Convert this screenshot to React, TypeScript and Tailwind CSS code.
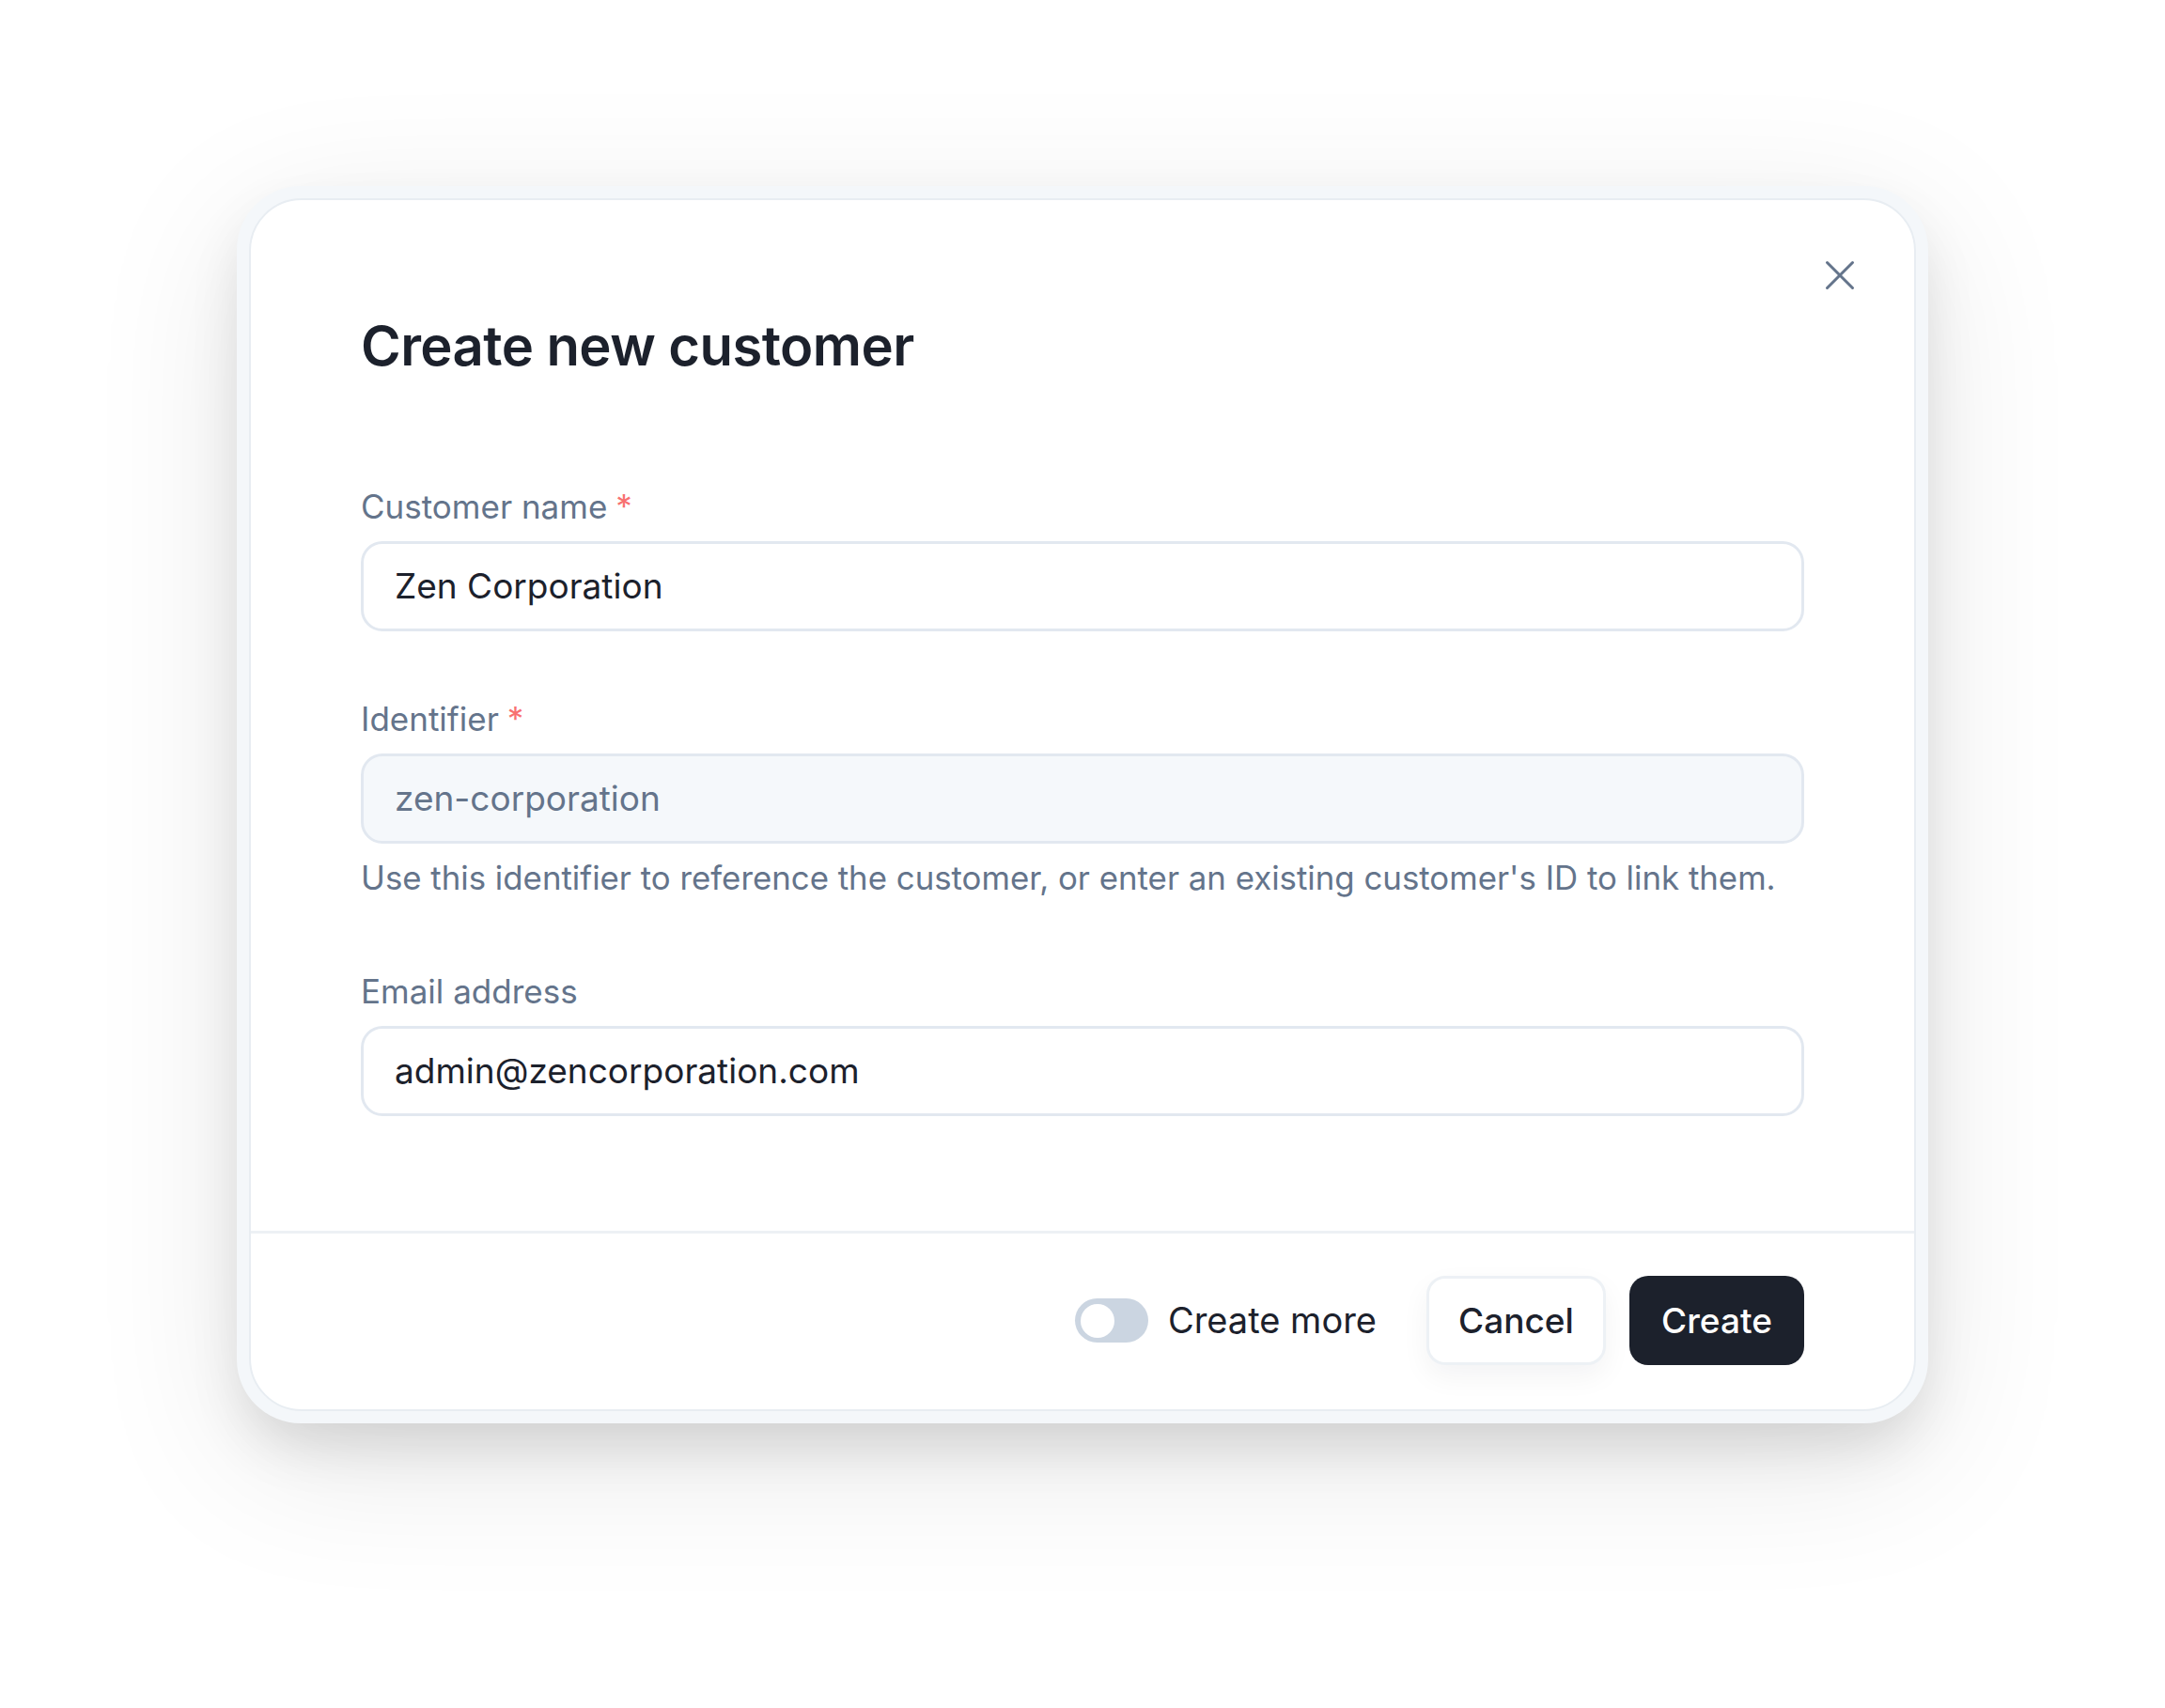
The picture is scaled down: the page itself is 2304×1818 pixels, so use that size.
import { X } from "lucide-react";

const font = { fontFamily: "Inter, 'Noto Sans', sans-serif" };

const Label = ({ text, required }: { text: string; required?: boolean }) => (
  <div className="flex items-start text-[35px] leading-[35px] text-[#64748b]">
    <span>{text}</span>
    {required && <span className="ml-[9px] text-[#f87171]">*</span>}
  </div>
);

const App = () => {
  return (
    <div className="min-h-screen bg-white pt-[198px] pb-[300px]" style={font}>
      <div className="mx-auto w-[1800px] rounded-[68px] bg-[#f4f7fa] p-[13px] shadow-[0_30px_60px_-10px_rgba(0,0,0,0.13),0_40px_160px_rgba(0,0,0,0.10)]">
        <div className="relative rounded-[56px] border-2 border-[#e8edf2] bg-white">
          <button className="absolute right-[52px] top-[53px] text-[#64748b]">
            <X size={54} strokeWidth={1.35} />
          </button>

          <div className="px-[117px] pt-[126px] pb-[122px]">
            <h1 className="text-[58px] leading-[58px] font-semibold tracking-[-0.01em] text-[#1c212c]">
              Create new customer
            </h1>

            <div className="mt-[125px]">
              <Label text="Customer name" required />
              <div className="mt-[19px] flex h-[96px] items-center rounded-[23px] border-[3px] border-[#e2e8f0] bg-white px-[33px] text-[37px] text-[#1c212c]">
                Zen Corporation
              </div>
            </div>

            <div className="mt-[76px]">
              <Label text="Identifier" required />
              <div className="mt-[19px] flex h-[96px] items-center rounded-[23px] border-[3px] border-[#e2e8f0] bg-[#f5f8fb] px-[33px] text-[37px] text-[#64748b]">
                zen-corporation
              </div>
              <p className="mt-[19px] text-[34.8px] leading-[35px] text-[#64748b]">
                Use this identifier to reference the customer, or enter an existing customer's ID to link them.
              </p>
            </div>

            <div className="mt-[86px]">
              <Label text="Email address" />
              <div className="mt-[19px] flex h-[96px] items-center rounded-[23px] border-[3px] border-[#e2e8f0] bg-white px-[33px] text-[37px] text-[#1c212c]">
                admin@zencorporation.com
              </div>
            </div>
          </div>

          <div className="flex items-center justify-end gap-[25px] border-t-[3px] border-[#edf1f5] px-[117px] pt-[45px] pb-[47px]">
            <div className="mr-[28px] flex items-center gap-[21px]">
              <div className="flex h-[47px] w-[78px] items-center rounded-full bg-[#cbd5e1] px-[6px]">
                <div className="h-[36px] w-[36px] rounded-full bg-white" />
              </div>
              <span className="text-[38px] text-[#1c212c]">Create more</span>
            </div>
            <button className="h-[95px] w-[191px] rounded-[20px] border-[3px] border-[#edf1f5] bg-white text-[37px] font-medium text-[#1c212c] shadow-[0_12px_30px_rgba(15,23,42,0.05)]">
              Cancel
            </button>
            <button className="h-[95px] w-[186px] rounded-[20px] bg-[#1c212c] text-[37px] font-medium text-white">
              Create
            </button>
          </div>
        </div>
      </div>
    </div>
  );
};

export default App;
